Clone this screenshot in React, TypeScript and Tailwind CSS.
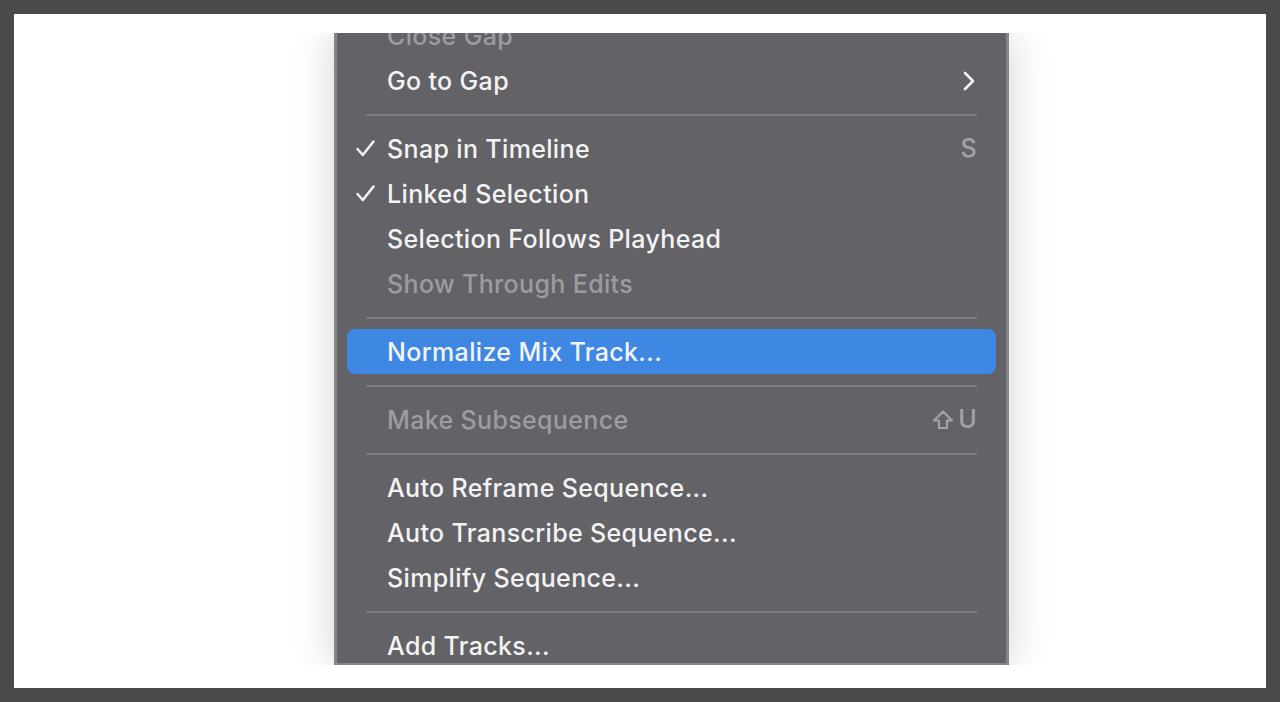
import React from 'react';

type Item =
  | { kind: 'sep' }
  | {
      kind: 'item';
      label: string;
      disabled?: boolean;
      checked?: boolean;
      active?: boolean;
      shortcut?: React.ReactNode;
      submenu?: boolean;
    };

function Check() {
  return (
    <svg width="21" height="19" viewBox="0 0 21 19" fill="none">
      <path d="M2.5 10 L7.8 16 L18.5 2.5" stroke="currentColor" strokeWidth="2.5" strokeLinecap="round" strokeLinejoin="round" />
    </svg>
  );
}

function Chevron() {
  return (
    <svg width="14" height="22" viewBox="0 0 14 22" fill="none">
      <path d="M3 3 L11 11 L3 19" stroke="currentColor" strokeWidth="2.6" strokeLinecap="round" strokeLinejoin="round" />
    </svg>
  );
}

function ShiftKey() {
  return (
    <svg width="22" height="22" viewBox="0 0 22 22" fill="none">
      <path d="M11 2.5 L20 11.5 H15 V19 H7 V11.5 H2 Z" stroke="currentColor" strokeWidth="2.2" strokeLinejoin="round" />
    </svg>
  );
}

const items: Item[] = [
  { kind: 'item', label: 'Close Gap', disabled: true },
  { kind: 'item', label: 'Go to Gap', submenu: true },
  { kind: 'sep' },
  { kind: 'item', label: 'Snap in Timeline', checked: true, shortcut: <span className="text-[#a3a2a7]">S</span> },
  { kind: 'item', label: 'Linked Selection', checked: true },
  { kind: 'item', label: 'Selection Follows Playhead' },
  { kind: 'item', label: 'Show Through Edits', disabled: true },
  { kind: 'sep' },
  { kind: 'item', label: 'Normalize Mix Track...', active: true },
  { kind: 'sep' },
  {
    kind: 'item',
    label: 'Make Subsequence',
    disabled: true,
    shortcut: (
      <span className="flex items-center gap-[4px] text-[#a3a2a7]">
        <ShiftKey />
        <span>U</span>
      </span>
    ),
  },
  { kind: 'sep' },
  { kind: 'item', label: 'Auto Reframe Sequence...' },
  { kind: 'item', label: 'Auto Transcribe Sequence...' },
  { kind: 'item', label: 'Simplify Sequence...' },
  { kind: 'sep' },
  { kind: 'item', label: 'Add Tracks...' },
];

function MenuRow({ item }: { item: Item }) {
  if (item.kind === 'sep') {
    return (
      <div className="h-[23px] flex items-center px-[29px]">
        <div className="h-[2px] w-full bg-[#7c7b80]" />
      </div>
    );
  }
  const textColor = item.disabled ? 'text-[#9d9ca1]' : 'text-[#f3f3f3]';
  return (
    <div
      className={`h-[45px] mx-[10px] rounded-[8px] flex items-center pl-[8px] pr-[19px] ${
        item.active ? 'bg-[#3e87e3]' : ''
      } ${textColor}`}
    >
      <span className="w-[32px] flex items-center text-[#f3f3f3]">{item.checked && <Check />}</span>
      <span className="flex-1 whitespace-nowrap pt-[1px]">{item.label}</span>
      {item.shortcut}
      {item.submenu && (
        <span className="text-[#f3f3f3] pr-[1px]">
          <Chevron />
        </span>
      )}
    </div>
  );
}

export default function App() {
  return (
    <div className="h-[702px] w-[1280px] bg-[#4a4a4a] p-[14px]">
      <div className="h-full w-full bg-white flex pl-[260px] pt-[19px] pb-[23px]">
        <div className="h-full overflow-hidden px-[60px]">
          <div className="h-full w-[675px] bg-[#636267] border-x-[3px] border-b-2 border-[#86858a] overflow-hidden shadow-[0_0_40px_rgba(0,0,0,0.18)]">
            <div
              className="-mt-[20px] text-[25px] font-medium leading-none tracking-[0.35px]"
              style={{ fontFamily: 'Inter, "Noto Sans", sans-serif' }}
            >
              {items.map((item, i) => (
                <MenuRow key={i} item={item} />
              ))}
            </div>
          </div>
        </div>
      </div>
    </div>
  );
}
